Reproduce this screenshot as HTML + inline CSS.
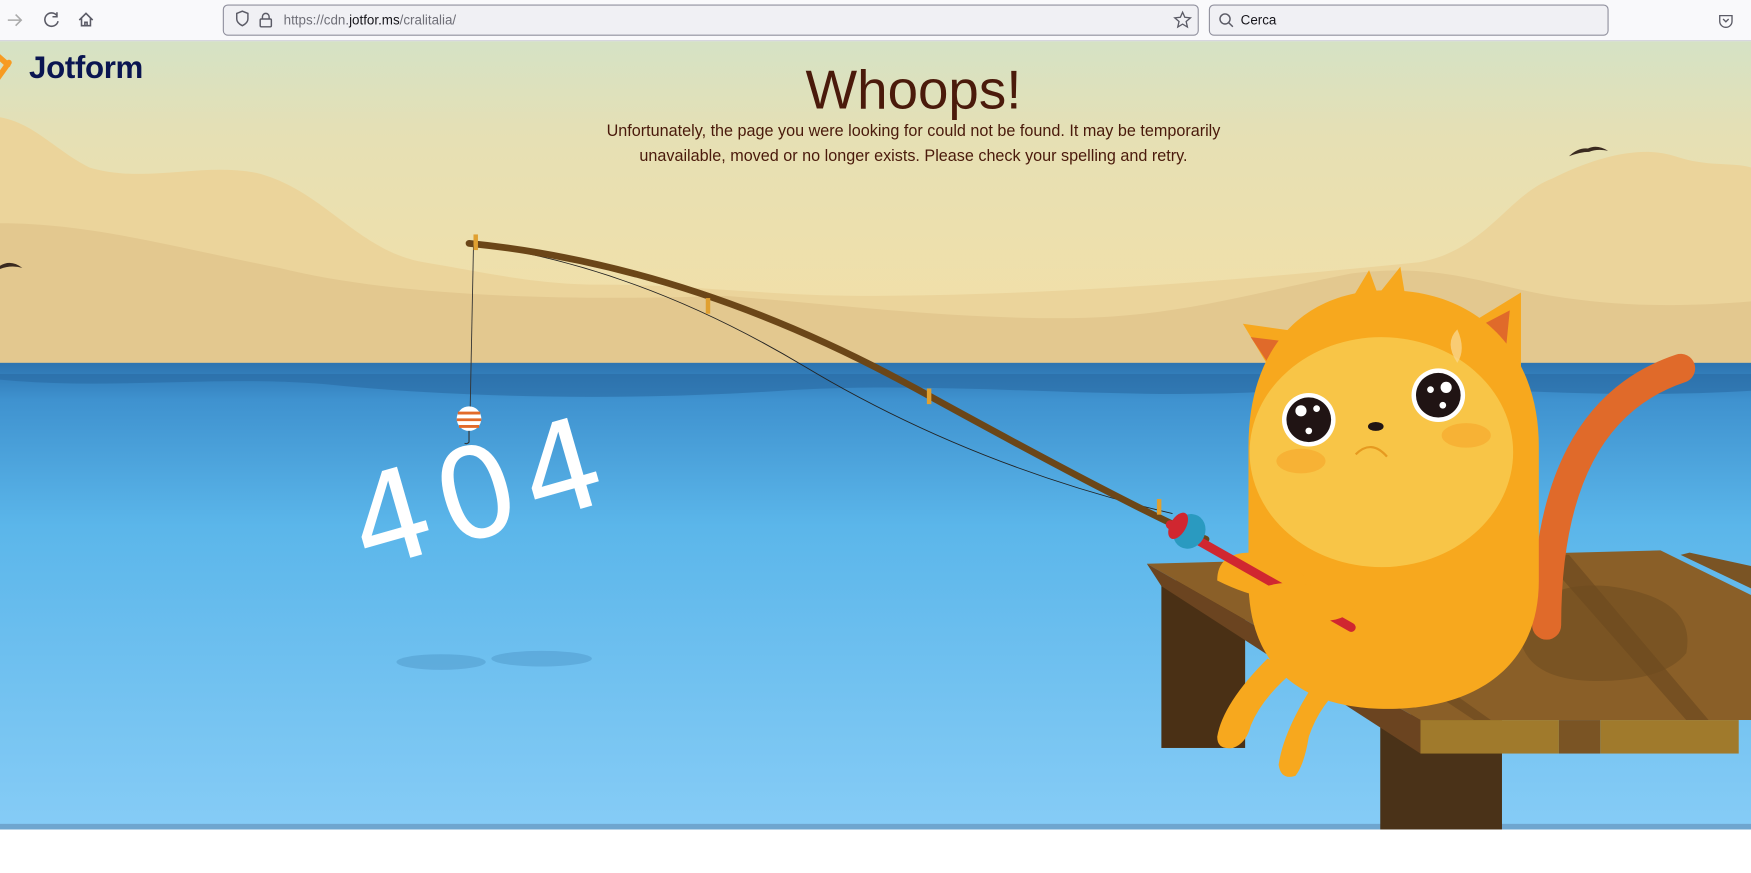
<!DOCTYPE html>
<html><head><meta charset="utf-8"><style>
html,body{margin:0;padding:0;width:1751px;height:873px;overflow:hidden;background:#fff}
svg{display:block}
</style></head><body>
<svg width="1751" height="873" viewBox="0 0 1568 782" preserveAspectRatio="none" xmlns="http://www.w3.org/2000/svg" font-family="Liberation Sans, Arial, sans-serif">
<defs>
<linearGradient id="sky" x1="0" y1="0" x2="0" y2="1"><stop offset="0" stop-color="#d5e2c5"/><stop offset="0.3" stop-color="#e6e0b4"/><stop offset="1" stop-color="#f5dfa5"/></linearGradient>
<linearGradient id="sea" x1="0" y1="0" x2="0" y2="1"><stop offset="0" stop-color="#2d74b0"/><stop offset="0.08" stop-color="#3f92cf"/><stop offset="0.35" stop-color="#5bb6ea"/><stop offset="1" stop-color="#86ccf6"/></linearGradient>
</defs>
<rect x="0" y="0" width="1568" height="37" fill="#f9f9fb"/>
<rect x="0" y="36" width="1568" height="1" fill="#cfcfd8"/>
<g stroke="#5b5b66" stroke-width="1.4" fill="none">
<path d="M7 18h12M14 13l5 5-5 5" stroke="#aaa"/>
<path d="M51 14a6 6 0 1 0 1 5M51 11v4h-4"/>
<path d="M71 18l6-6 6 6M73 16v7h8v-7M76 23v-3h2v3"/>
</g>
<rect x="200" y="4.5" width="873" height="27" rx="4" fill="#f0f0f4" stroke="#8f8f9d"/>
<path d="M212 12l5-2 5 2v5c0 3-3 5-5 6c-2-1-5-3-5-6z" fill="none" stroke="#5b5b66" stroke-width="1.3"/>
<rect x="233" y="17" width="10" height="7" rx="1" fill="none" stroke="#5b5b66" stroke-width="1.3"/>
<path d="M235 17v-2a3 3 0 0 1 6 0v2" fill="none" stroke="#5b5b66" stroke-width="1.3"/>
<text x="254" y="22" font-size="12" fill="#6f6f78">https://cdn.<tspan fill="#15141a">jotfor.ms</tspan>/cralitalia/</text>
<path d="M1059 11l2 4.5 5 .5-3.8 3.3 1.1 4.9-4.3-2.6-4.3 2.6 1.1-4.9-3.8-3.3 5-.5z" fill="none" stroke="#5b5b66" stroke-width="1.2"/>
<rect x="1083" y="4.5" width="357" height="27" rx="4" fill="#f0f0f4" stroke="#8f8f9d"/>
<circle cx="1097" cy="17" r="4.5" fill="none" stroke="#5b5b66" stroke-width="1.3"/><path d="M1100 20l4 4" stroke="#5b5b66" stroke-width="1.3"/>
<text x="1111" y="22" font-size="12" fill="#15141a">Cerca</text>
<path d="M1540 14h11v5a5.5 5.5 0 0 1-11 0z" fill="none" stroke="#5b5b66" stroke-width="1.2"/><path d="M1543 17l2.5 2.5 2.5-2.5" fill="none" stroke="#5b5b66" stroke-width="1.2"/>

<rect x="0" y="37" width="1568" height="290" fill="url(#sky)"/>
<path d="M0 105c30 5 50 30 80 45c50 15 100-5 150 5c60 15 90 70 150 80c60 10 100 20 160 20c80 0 150 10 230 10c150 0 300-10 500-30c60-10 80-60 120-75c40-20 80-30 110-20c30 10 50 5 68 10v185H0z" fill="#ebd49b"/>
<path d="M0 200c80 0 150 20 250 40c100 25 250 30 400 25c120 10 200 20 300 20c100 0 160-20 260-40c80-10 120 10 180 20c60 10 120 10 178 5v57H0z" fill="#e3c88f"/>
<path d="M1405 140q8-8 17-7q8-4 18 2q-10-2-17 1q-8 0-18 4z" fill="#3a2a20"/>
<path d="M0 238q10-6 20 2q-10-3-20 1z" fill="#3a2a20"/>
<rect x="0" y="325" width="1568" height="418" fill="url(#sea)"/>
<path d="M0 340c100 10 200-5 300 5s250 15 400 5 300 10 450 0 250 10 418 0v-15H0z" fill="#2a6aa3" opacity="0.6"/>
<rect x="0" y="738" width="1568" height="5" fill="#6fa6cf"/>

<text x="818" y="97" font-size="49" fill="#4a1a0b" text-anchor="middle">Whoops!</text>
<text x="818" y="122" font-size="14.5" fill="#4a1a0b" text-anchor="middle">Unfortunately, the page you were looking for could not be found. It may be temporarily</text>
<text x="818" y="144" font-size="14.5" fill="#4a1a0b" text-anchor="middle">unavailable, moved or no longer exists. Please check your spelling and retry.</text>

<path d="M-2 50l9 8M-2 70l10-14" stroke="#f79b22" stroke-width="5" stroke-linecap="round"/>
<text x="26" y="70" font-size="28" font-weight="bold" fill="#0a1551" letter-spacing="-0.3">Jotform</text>

<g font-size="112" fill="#fff" font-family="DejaVu Sans, sans-serif" transform="rotate(-16 430 440)"><text x="430" y="480" text-anchor="middle" letter-spacing="8">404</text></g>
<g opacity="0.3" fill="#3b7fb3"><ellipse cx="395" cy="593" rx="40" ry="7"/><ellipse cx="485" cy="590" rx="45" ry="7"/></g>

<path d="M420 218q150 20 300 110t330 132" fill="none" stroke="#222" stroke-width="0.8"/>
<path d="M420 218q200 20 400 130t260 135" fill="none" stroke="#6b4618" stroke-width="6" stroke-linecap="round"/>
<line x1="424" y1="220" x2="421" y2="368" stroke="#333" stroke-width="0.8"/>
<circle cx="420" cy="375" r="11" fill="#fff"/><path d="M410 370h20M409 376h22M411 382h18" stroke="#e26a2a" stroke-width="2.5"/>
<path d="M420 386v10a3 3 0 0 1-4 1" fill="none" stroke="#333"/>
<g fill="#e0a030"><rect x="424" y="210" width="4" height="14"/><rect x="632" y="267" width="4" height="14"/><rect x="830" y="348" width="4" height="14"/><rect x="1036" y="447" width="4" height="14"/></g>

<rect x="1040" y="520" width="75" height="150" fill="#4a3015"/>
<rect x="1236" y="640" width="109" height="103" fill="#4a3218"/>
<path d="M1027 505l460-12l81 40v112h-296z" fill="#8a5f28"/>
<path d="M1505 497l63 30v-20l-55-12z" fill="#7a5424"/>
<path d="M1027 505l245 140v30l-232-150z" fill="#6b4420"/>
<path d="M1110 505l210 140h15l-200-142zM1380 497l130 148h20l-125-148z" fill="#6e4a20" opacity="0.7"/>
<rect x="1272" y="645" width="124" height="30" fill="#a07a2c"/>
<rect x="1433" y="645" width="124" height="30" fill="#a07a2c"/>
<rect x="1396" y="645" width="37" height="30" fill="#7a5424"/>
<path d="M1360 560q20-40 80-35q80 10 70 60q-20 25-80 25q-70 0-70-50z" fill="#6e4a1f" opacity="0.55"/>

<path d="M1385 560q0-190 120-230" fill="none" stroke="#e06a2a" stroke-width="26" stroke-linecap="round"/>
<path d="M1113 290l30 50 40-40z" fill="#f7a81e"/>
<path d="M1300 300l62-38 0 85z" fill="#f7a81e"/>
<path d="M1120 302l20 30 20-25z" fill="#e06a2a"/>
<path d="M1310 300l42-22 -5 50z" fill="#e06a2a"/>
<path d="M1208 272l18-30 8 22 20-25 5 30z" fill="#f7a81e"/>
<path d="M1118 400c0-90 50-140 125-140s135 50 135 140v120c0 80-60 115-135 115s-125-35-125-115z" fill="#f7a81e"/>
<ellipse cx="1237" cy="405" rx="118" ry="103" fill="#f8c547"/>
<ellipse cx="1165" cy="413" rx="22" ry="11" fill="#f7b235"/>
<ellipse cx="1313" cy="390" rx="22" ry="11" fill="#f7b235"/>
<circle cx="1172" cy="376" r="24" fill="#fff"/><circle cx="1172" cy="376" r="20" fill="#201414"/><circle cx="1165" cy="368" r="5" fill="#fff"/><circle cx="1179" cy="366" r="3" fill="#fff"/><circle cx="1172" cy="386" r="3" fill="#fff"/>
<circle cx="1288" cy="354" r="24" fill="#fff"/><circle cx="1288" cy="354" r="20" fill="#201414"/><circle cx="1295" cy="347" r="5" fill="#fff"/><circle cx="1281" cy="349" r="3" fill="#fff"/><circle cx="1292" cy="363" r="3" fill="#fff"/>
<ellipse cx="1232" cy="382" rx="7" ry="4" fill="#201414"/>
<path d="M1214 407q14-14 28 2" fill="none" stroke="#e69a20" stroke-width="2"/>
<path d="M1305 325q-12-18 0-30q8 18 0 30z" fill="#f9d48a" opacity="0.8"/>
<path d="M1090 520q0-25 30-25q40 0 60 40q-40 10-90-15z" fill="#f7a81e"/>
<line x1="1048" y1="470" x2="1210" y2="562" stroke="#d02730" stroke-width="8" stroke-linecap="round"/>
<ellipse cx="1065" cy="476" rx="14" ry="16" fill="#2a9ac0" transform="rotate(30 1065 476)"/>
<ellipse cx="1055" cy="471" rx="7" ry="13" fill="#d02730" transform="rotate(30 1055 471)"/>
<path d="M1135 525q30-10 80 15q-10 20-40 15q-30-5-40-30z" fill="#f7a81e"/>
<path d="M1135 590q-40 40-45 70q0 12 14 10q12-4 16-20q10-25 40-50z" fill="#f7a81e"/>
<path d="M1185 600q-35 50-40 85q2 14 15 10q8-10 12-35q10-30 35-50z" fill="#f7a81e"/>
</svg>
</body></html>
